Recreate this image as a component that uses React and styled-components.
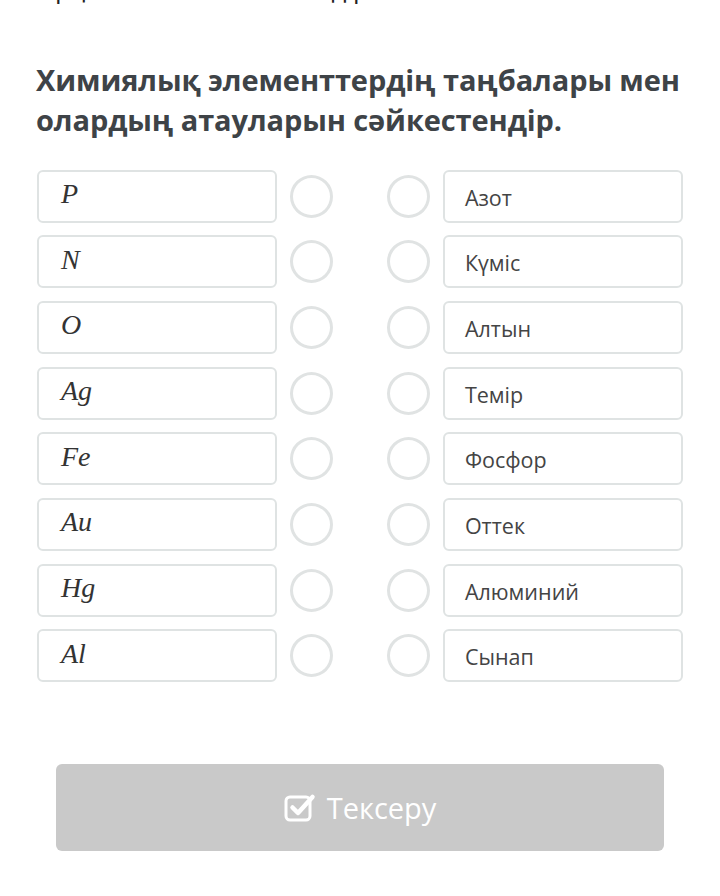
import React from "react";
import styled, { createGlobalStyle } from "styled-components";

const Global = createGlobalStyle`
  html, body { margin: 0; padding: 0; background: #fff; }
  body { font-family: "Open Sans", "Noto Sans", sans-serif; overflow: hidden; }
`;

const Page = styled.div`
  width: 720px;
  height: 896px;
  overflow: hidden;
  position: relative;
`;

const Cut = styled.div`
  margin-top: -25px;
  padding-left: 36px;
  font-size: 26px;
  line-height: 26px;
  height: 26px;
  color: #222;
  white-space: nowrap;
`;

const Content = styled.div`
  padding: 0 37px;
`;

const Title = styled.h2`
  margin: 59px 0 0 -1px;
  font-family: "Open Sans", sans-serif;
  font-weight: 700;
  font-size: 29px;
  line-height: 40px;
  color: #3e4347;
  letter-spacing: -0.1px;
`;

const Rows = styled.div`
  margin-top: 30px;
  display: flex;
  flex-direction: column;
  gap: 13.7px;
`;

const Row = styled.div`
  display: flex;
  align-items: center;
  height: 52px;
`;

const Box = styled.div`
  box-sizing: border-box;
  width: 241px;
  height: 53px;
  border: 2px solid #dfe3e3;
  border-radius: 6px;
  display: flex;
  align-items: center;
  padding-left: ${(p) => p.$pad || "22px"};
  margin-left: ${(p) => p.$ml || "0"};
  background: #fff;
`;

const Symbol = styled.span`
  font-family: "Liberation Serif", "DejaVu Serif", serif;
  font-style: italic;
  font-size: 28px;
  color: #333;
  margin-top: -4px;
`;

const Name = styled.span`
  font-family: "Open Sans", sans-serif;
  font-size: 21.5px;
  color: #444;
  margin-top: 2px;
`;

const Dot = styled.div`
  box-sizing: border-box;
  width: 43px;
  height: 43px;
  border-radius: 50%;
  border: 3px solid #e0e3e3;
  margin: ${(p) => p.$m};
`;

const Button = styled.button`
  margin: 82px 0 0 19px;
  width: 608px;
  height: 87px;
  border: none;
  border-radius: 6px;
  background: #c9c9c9;
  color: #fff;
  display: flex;
  align-items: center;
  justify-content: center;
  gap: 11px;
  font-family: "Open Sans", sans-serif;
  font-size: 29px;
  padding: 0;
`;

const left = ["P", "N", "O", "Ag", "Fe", "Au", "Hg", "Al"];
const right = ["Азот", "Күміс", "Алтын", "Темір", "Фосфор", "Оттек", "Алюминий", "Сынап"];

const CheckIcon = () => (
  <svg width="32" height="30" viewBox="0 0 32 30" fill="none">
    <rect x="2" y="5" width="24" height="23" rx="4" stroke="#fff" strokeWidth="3" />
    <path d="M8.5 15.5 L14 21 L28.5 5" stroke="#fff" strokeWidth="4.5" strokeLinecap="round" strokeLinejoin="round" />
  </svg>
);

export default function App() {
  return (
    <Page>
      <Global />
      <Cut>Әрқайсысын сәйкестендір</Cut>
      <Content>
        <Title>
          Химиялық элементтердің таңбалары мен олардың атауларын сәйкестендір.
        </Title>
        <Rows>
          {left.map((s, i) => (
            <Row key={s}>
              <Box>
                <Symbol>{s}</Symbol>
              </Box>
              <Dot $m="0 0 0 13px" />
              <Dot $m="0 0 0 54px" />
              <Box $ml="13px" $pad="20px">
                <Name>{right[i]}</Name>
              </Box>
            </Row>
          ))}
        </Rows>
        <Button>
          <CheckIcon />
          <span>Тексеру</span>
        </Button>
      </Content>
    </Page>
  );
}
